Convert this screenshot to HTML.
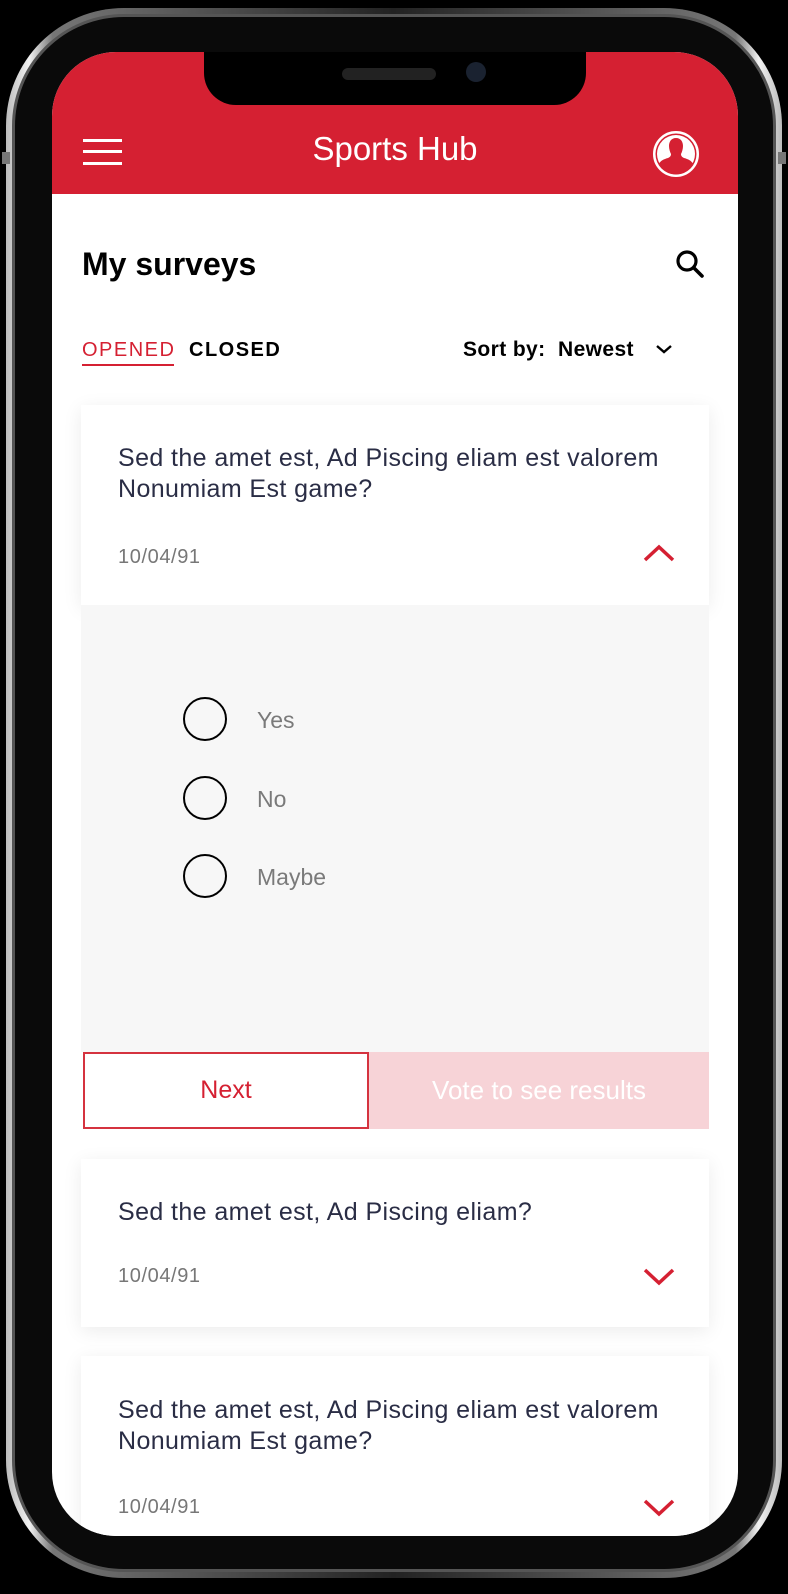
<!DOCTYPE html>
<html><head><meta charset="utf-8"><style>
*{margin:0;padding:0;box-sizing:border-box}
body{width:788px;height:1594px;background:#000;position:relative;overflow:hidden;font-family:"Liberation Sans","DejaVu Sans",sans-serif}
.a{position:absolute}
.rim{left:6px;top:8px;width:776px;height:1570px;border-radius:118px;background:linear-gradient(90deg,#bbb,#f2f2f2 3%,#777 6%,#222 50%,#777 94%,#f2f2f2 97%,#bbb);}
.rim2{left:12px;top:14px;width:764px;height:1558px;border-radius:112px;background:#0a0a0a;border:3px solid #555}
.screen{left:52px;top:52px;width:686px;height:1484px;border-radius:64px;background:#fff;overflow:hidden}
.hdr{left:0;top:0;width:686px;height:142px;background:#d52032}
.notch{left:152px;top:-4px;width:382px;height:57px;background:#000;border-radius:0 0 32px 32px}
.card{background:#fff;box-shadow:0 4px 18px rgba(0,0,0,.08)}
.q{color:#2a2d45;font-size:25px;line-height:31px;letter-spacing:0.4px}
.d{color:#777;font-size:20px;letter-spacing:0.6px}
.opt{color:#7a7a7a;font-size:23px}
.rad{width:44px;height:44px;border:2px solid #000;border-radius:50%}
</style></head><body>
<div class="a rim"></div>
<div class="a rim2"></div>
<div class="a" style="left:2px;top:152px;width:8px;height:12px;background:#777"></div>
<div class="a" style="left:778px;top:152px;width:8px;height:12px;background:#777"></div>
<div class="a screen">
 <div class="a hdr"></div>
 <div class="a notch"></div>
 <div class="a" style="left:290px;top:16px;width:94px;height:12px;border-radius:6px;background:#222"></div>
 <div class="a" style="left:414px;top:10px;width:20px;height:20px;border-radius:50%;background:#1a2230"></div>
 <div class="a" style="left:31px;top:87px;width:39px;height:3px;background:#fff"></div>
 <div class="a" style="left:31px;top:98px;width:39px;height:3px;background:#fff"></div>
 <div class="a" style="left:31px;top:110px;width:39px;height:3px;background:#fff"></div>
 <div class="a" style="left:0;top:78px;width:686px;text-align:center;color:#fff;font-size:33px">Sports Hub</div>
 <svg class="a" style="left:600px;top:78px" width="48" height="48" viewBox="0 0 48 48"><circle cx="24" cy="24" r="22.5" fill="#fff" stroke="#fff"/><circle cx="24" cy="24" r="20.5" fill="#d52032"/><circle cx="24" cy="24" r="19" fill="#fff"/><path d="M24 8c-5 0-7 4-7 8 0 3 1 6 2 8 0 2-1 3-3 4-4 1-8 3-9 6a19 19 0 0 0 34 0c-1-3-5-5-9-6-2-1-3-2-3-4 1-2 2-5 2-8 0-4-2-8-7-8z" fill="#d52032"/></svg>
 <div class="a" style="left:30px;top:194px;font-size:32px;font-weight:bold;color:#000">My surveys</div>
 <svg class="a" style="left:622px;top:196px" width="32" height="32" viewBox="0 0 32 32"><circle cx="13" cy="13" r="9" fill="none" stroke="#000" stroke-width="3.2"/><path d="M20 20l8 8" stroke="#000" stroke-width="3.6" stroke-linecap="round"/></svg>
 <div class="a" style="left:30px;top:287px;font-size:20px;color:#d52032;letter-spacing:1.5px">OPENED</div>
 <div class="a" style="left:30px;top:312px;width:92px;height:2px;background:#d52032"></div>
 <div class="a" style="left:137px;top:287px;font-size:20px;font-weight:bold;color:#000;letter-spacing:1.5px">CLOSED</div>
 <div class="a" style="left:411px;top:286px;font-size:21px;font-weight:bold;color:#000;letter-spacing:0.4px">Sort by:&nbsp; Newest</div>
 <svg class="a" style="left:603px;top:291px" width="18" height="12" viewBox="0 0 18 12"><path d="M2 3l7 6 7-6" fill="none" stroke="#000" stroke-width="2.4"/></svg>

 <div class="a card" style="left:29px;top:353px;width:628px;height:200px"></div>
 <div class="a q" style="left:66px;top:391px">Sed the amet est, Ad Piscing eliam est valorem<br>Nonumiam Est game?</div>
 <div class="a d" style="left:66px;top:494px">10/04/91</div>
 <svg class="a" style="left:590px;top:491px" width="34" height="20" viewBox="0 0 34 20"><path d="M3 17L17 4l14 13" fill="none" stroke="#d52032" stroke-width="3.5"/></svg>

 <div class="a" style="left:29px;top:553px;width:628px;height:447px;background:#f7f7f7"></div>
 <div class="a rad" style="left:131px;top:645px"></div>
 <div class="a opt" style="left:205px;top:655px">Yes</div>
 <div class="a rad" style="left:131px;top:724px"></div>
 <div class="a opt" style="left:205px;top:734px">No</div>
 <div class="a rad" style="left:131px;top:802px"></div>
 <div class="a opt" style="left:205px;top:812px">Maybe</div>

 <div class="a" style="left:31px;top:1000px;width:286px;height:77px;border:2px solid #d5333f;background:#fff;color:#d52032;font-size:25px;text-align:center;line-height:73px">Next</div>
 <div class="a" style="left:317px;top:1000px;width:340px;height:77px;background:#f7d3d7;color:#fff;font-size:26px;text-align:center;line-height:77px">Vote to see results</div>

 <div class="a card" style="left:29px;top:1107px;width:628px;height:168px"></div>
 <div class="a q" style="left:66px;top:1145px">Sed the amet est, Ad Piscing eliam?</div>
 <div class="a d" style="left:66px;top:1213px">10/04/91</div>
 <svg class="a" style="left:590px;top:1215px" width="34" height="20" viewBox="0 0 34 20"><path d="M3 3l14 13L31 3" fill="none" stroke="#d52032" stroke-width="3.5"/></svg>

 <div class="a card" style="left:29px;top:1304px;width:628px;height:220px"></div>
 <div class="a q" style="left:66px;top:1343px">Sed the amet est, Ad Piscing eliam est valorem<br>Nonumiam Est game?</div>
 <div class="a d" style="left:66px;top:1444px">10/04/91</div>
 <svg class="a" style="left:590px;top:1446px" width="34" height="20" viewBox="0 0 34 20"><path d="M3 3l14 13L31 3" fill="none" stroke="#d52032" stroke-width="3.5"/></svg>
</div>
</body></html>
